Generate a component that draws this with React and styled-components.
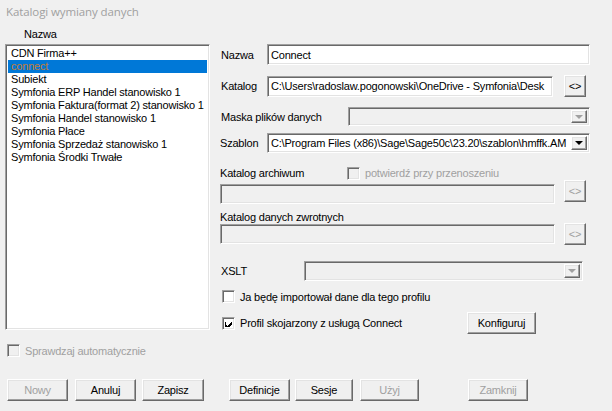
import React from 'react';
import styled, { createGlobalStyle } from 'styled-components';

const GlobalStyle = createGlobalStyle`
  html, body {
    margin: 0;
    padding: 0;
    background: #f0f0f0;
  }
  body {
    font-family: "Liberation Sans", Arial, sans-serif;
    font-size: 11px;
    letter-spacing: -0.2px;
    color: #000;
  }
  * {
    box-sizing: border-box;
  }
`;

const Window = styled.div`
  width: 612px;
  height: 411px;
  background: #f0f0f0;
  overflow: hidden;
`;

const TitleBar = styled.div`
  height: 23px;
  padding-left: 6px;
  display: flex;
  align-items: center;
  font-family: "Open Sans", "Noto Sans", sans-serif;
  font-size: 11.5px;
  letter-spacing: -0.1px;
  color: #a0a0a0;
`;

const Body = styled.div`
  display: flex;
  height: 312px;
`;

const ListPane = styled.div`
  width: 205px;
  margin-left: 5px;
  display: flex;
  flex-direction: column;
`;

const ListHeader = styled.div`
  height: 21px;
  padding-left: 19px;
  display: flex;
  align-items: center;
`;

const sunken = `
  border: 1px solid;
  border-color: #a0a0a0 #ffffff #ffffff #a0a0a0;
  box-shadow: inset 1px 1px 0 #696969, inset -1px -1px 0 #e3e3e3;
`;

const raised = `
  border: 1px solid;
  border-color: #ffffff #696969 #696969 #ffffff;
  box-shadow: inset -1px -1px 0 #a0a0a0, inset 1px 1px 0 #e3e3e3;
`;

const ListBox = styled.div`
  ${sunken}
  height: 286px;
  background: #fff;
  padding: 2px 2px;
`;

const ListRow = styled.div`
  height: 13px;
  line-height: 13px;
  padding-left: 3px;
  white-space: nowrap;
  background: ${(p) => (p.$selected ? '#0078d7' : 'transparent')};
  color: ${(p) => (p.$selected ? '#c47c36' : '#000')};
`;

const FormPane = styled.div`
  margin-left: 10px;
  width: 392px;
  padding-top: 21px;
  display: flex;
  flex-direction: column;
`;

const Row = styled.div`
  display: flex;
  align-items: ${(p) => p.$align || 'center'};
  height: ${(p) => p.$h}px;
  margin-top: ${(p) => p.$mt || 0}px;
  margin-left: ${(p) => p.$ml || 0}px;
`;

const Label = styled.div`
  width: ${(p) => p.$w}px;
  padding-left: ${(p) => (p.$pl === undefined ? 1 : p.$pl)}px;
  flex-shrink: 0;
  white-space: nowrap;
`;

const TextField = styled.div`
  ${sunken}
  width: ${(p) => p.$w}px;
  height: ${(p) => p.$h || 21}px;
  margin-top: ${(p) => p.$mt || 0}px;
  background: ${(p) => (p.$disabled ? '#f0f0f0' : '#fff')};
  padding: 0 3px;
  display: flex;
  align-items: center;
  white-space: nowrap;
  overflow: hidden;
  flex-shrink: 0;
`;

const Combo = styled.div`
  ${sunken}
  width: ${(p) => p.$w}px;
  height: ${(p) => p.$h || 20}px;
  background: ${(p) => (p.$disabled ? '#f0f0f0' : '#fff')};
  padding: 2px 2px 2px 3px;
  display: flex;
  align-items: center;
  flex-shrink: 0;
`;

const ComboText = styled.div`
  flex: 1;
  overflow: hidden;
  white-space: nowrap;
`;

const ComboButton = styled.div`
  ${raised}
  width: 16px;
  height: 100%;
  flex-shrink: 0;
  display: flex;
  align-items: center;
  justify-content: center;
  background: #f0f0f0;
`;

const Arrow = styled.div`
  width: 0;
  height: 0;
  border-left: 4px solid transparent;
  border-right: 4px solid transparent;
  border-top: 4px solid ${(p) => (p.$disabled ? '#a0a0a0' : '#000')};
`;

const Button = styled.div`
  ${raised}
  width: ${(p) => p.$w}px;
  height: 22px;
  margin-left: ${(p) => p.$ml || 0}px;
  margin-right: ${(p) => p.$mr || 0}px;
  background: #f0f0f0;
  display: flex;
  align-items: center;
  justify-content: center;
  flex-shrink: 0;
  color: ${(p) => (p.$disabled ? '#a0a0a0' : '#000')};
`;

const PushRight = styled.div`
  flex: 1;
`;

const CheckBox = styled.div`
  ${sunken}
  width: 13px;
  height: 13px;
  flex-shrink: 0;
  background: ${(p) => (p.$disabled ? '#f0f0f0' : '#fff')};
  display: flex;
  align-items: center;
  justify-content: center;
`;

const CheckLabel = styled.div`
  margin-left: 5px;
  white-space: nowrap;
  color: ${(p) => (p.$disabled ? '#a0a0a0' : '#000')};
`;

const Bottom = styled.div`
  display: flex;
  flex-direction: column;
`;

const ButtonBar = styled.div`
  display: flex;
  margin-top: 22px;
  padding-left: 7px;
`;

const Check = () => (
  <svg width="7" height="7" viewBox="0 0 7 7" shapeRendering="crispEdges">
    <path d="M0 2h1v3h1v1h1v-1h1v-1h1v-1h1v-1h1v3h-1v1h-1v1h-1v1h-1v1h-1v-1h-1v-1h-1z" fill="#000" />
  </svg>
);

const profiles = [
  'CDN Firma++',
  'connect',
  'Subiekt',
  'Symfonia ERP Handel stanowisko 1',
  'Symfonia Faktura(format 2) stanowisko 1',
  'Symfonia Handel stanowisko 1',
  'Symfonia Płace',
  'Symfonia Sprzedaż stanowisko 1',
  'Symfonia Środki Trwałe',
];

export default function App() {
  return (
    <Window>
      <GlobalStyle />
      <TitleBar>Katalogi wymiany danych</TitleBar>
      <Body>
        <ListPane>
          <ListHeader>Nazwa</ListHeader>
          <ListBox>
            {profiles.map((name) => (
              <ListRow key={name} $selected={name === 'connect'}>
                {name}
              </ListRow>
            ))}
          </ListBox>
        </ListPane>

        <FormPane>
          <Row $h={21}>
            <Label $w={47}>Nazwa</Label>
            <TextField $w={323}>Connect</TextField>
          </Row>

          <Row $h={22} $mt={10}>
            <Label $w={47}>Katalog</Label>
            <TextField $w={286}>C:\Users\radoslaw.pogonowski\OneDrive - Symfonia\Desk</TextField>
            <Button $w={22} $ml={11}>&lt;&gt;</Button>
          </Row>

          <Row $h={19} $mt={10}>
            <Label $w={128}>Maska plików danych</Label>
            <Combo $w={242} $h={19} $disabled>
              <ComboText />
              <ComboButton>
                <Arrow $disabled />
              </ComboButton>
            </Combo>
          </Row>

          <Row $h={20} $mt={7}>
            <Label $w={47} $pl={0}>Szablon</Label>
            <Combo $w={323}>
              <ComboText>C:\Program Files (x86)\Sage\Sage50c\23.20\szablon\hmffk.AM</ComboText>
              <ComboButton>
                <Arrow />
              </ComboButton>
            </Combo>
          </Row>

          <Row $h={14} $mt={13}>
            <Label $w={127} $pl={0}>Katalog archiwum</Label>
            <CheckBox $disabled />
            <CheckLabel $disabled>potwierdź przy przenoszeniu</CheckLabel>
          </Row>

          <Row $h={23} $align="flex-start">
            <TextField $w={335} $h={20} $mt={4} $disabled />
            <Button $w={22} $ml={9} $disabled>&lt;&gt;</Button>
          </Row>

          <Row $h={13} $mt={7}>
            <Label $w={200} $pl={0}>Katalog danych zwrotnych</Label>
          </Row>

          <Row $h={22} $align="flex-start">
            <TextField $w={335} $h={20} $mt={1} $disabled />
            <Button $w={22} $ml={9} $disabled>&lt;&gt;</Button>
          </Row>

          <Row $h={20} $mt={16}>
            <Label $w={84}>XSLT</Label>
            <Combo $w={279} $disabled>
              <ComboText />
              <ComboButton>
                <Arrow $disabled />
              </ComboButton>
            </Combo>
          </Row>

          <Row $h={15} $mt={8} $ml={2}>
            <CheckBox />
            <CheckLabel>Ja będę importował dane dla tego profilu</CheckLabel>
          </Row>

          <Row $h={22} $mt={8} $ml={2}>
            <CheckBox>
              <Check />
            </CheckBox>
            <CheckLabel>Profil skojarzony z usługą Connect</CheckLabel>
            <PushRight />
            <Button $w={69} $mr={76}>Konfiguruj</Button>
          </Row>
        </FormPane>
      </Body>

      <Bottom>
        <Row $h={13} $mt={9} $ml={7}>
          <CheckBox $disabled />
          <CheckLabel $disabled>Sprawdzaj automatycznie</CheckLabel>
        </Row>
        <ButtonBar>
          <Button $w={61} $disabled>Nowy</Button>
          <Button $w={61} $ml={7}>Anuluj</Button>
          <Button $w={62} $ml={6}>Zapisz</Button>
          <Button $w={61} $ml={25}>Definicje</Button>
          <Button $w={58} $ml={5}>Sesje</Button>
          <Button $w={59} $ml={7} $disabled>Użyj</Button>
          <Button $w={60} $ml={49} $disabled>Zamknij</Button>
        </ButtonBar>
      </Bottom>
    </Window>
  );
}
